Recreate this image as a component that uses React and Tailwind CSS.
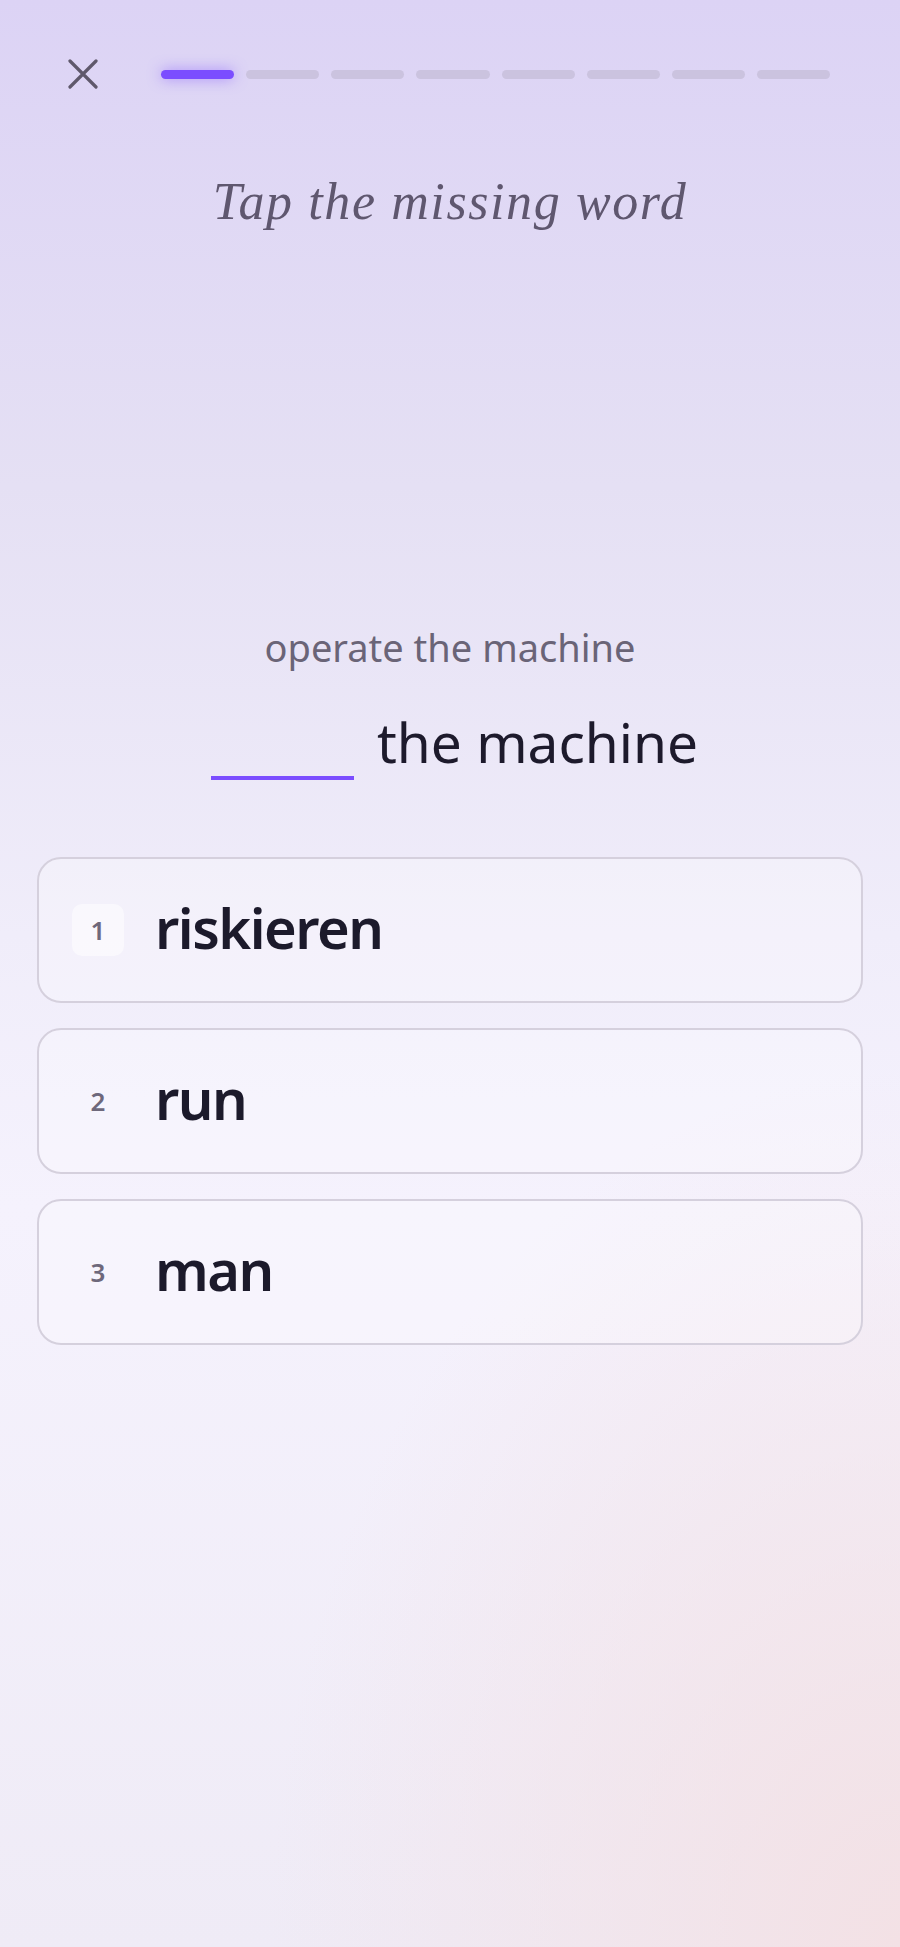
import React from 'react';

const options = [
    { n: 1, word: 'riskieren', active: true },
    { n: 2, word: 'run' },
    { n: 3, word: 'man' },
];

export default function App() {
    return (
        <div className="relative min-h-[1947px] w-full overflow-hidden bg-[radial-gradient(ellipse_70%_45%_at_100%_100%,#f3e1e5_0%,rgba(243,225,229,0)_100%),linear-gradient(180deg,#dcd3f5_0%,#e5e0f4_25%,#f0edfa_48%,#f5f2fd_62%,#efebf6_100%)] font-['Noto_Sans',sans-serif]">
            {/* Header */}
            <div className="flex items-center h-[30px] mt-[59px] pl-[68px] pr-[70px] gap-[63px]">
                <svg width="30" height="30" viewBox="0 0 30 30" className="shrink-0">
                    <path d="M2 2 L28 28 M28 2 L2 28" stroke="#5f586b" strokeWidth="3.2" strokeLinecap="round" />
                </svg>
                <div className="flex flex-1 gap-[12px]">
                    {Array.from({ length: 8 }).map((_, i) => (
                        <div
                            key={i}
                            className={i === 0
                                ? 'h-[9px] flex-1 rounded-full bg-[#7b4dff] shadow-[0_0_14px_rgba(123,77,255,0.55)]'
                                : 'h-[9px] flex-1 rounded-full bg-[#cbc3df]'}
                        />
                    ))}
                </div>
            </div>

            {/* Titulo */}
            <h1 className="mt-[85px] text-center text-[52px] leading-[56px] italic text-[#5f576f] font-['Liberation_Serif',serif] tracking-[1.6px]">
                Tap the missing word
            </h1>

            {/* Frase */}
            <p className="mt-[397px] text-center text-[38px] leading-[40px] text-[#6a6477]">
                operate the machine
            </p>
            <div className="mt-[43px] flex justify-center gap-[23px] pl-[9px]">
                <div className="w-[143px] h-[4px] mt-[66px] bg-[#7b4dff]" />
                <span className="text-[55px] leading-[64px] text-[#1d1a2c]">the machine</span>
            </div>

            {/* Opciones */}
            <div className="mt-[77px] mx-[37px] flex flex-col gap-[25px]">
                {options.map((o) => (
                    <div
                        key={o.n}
                        className="h-[146px] rounded-[24px] border-2 border-[#d5d0dd] bg-white/25 flex items-center pl-[33px] gap-[31px]"
                    >
                        <div className={`w-[52px] h-[52px] rounded-[10px] flex items-center justify-center text-[26px] font-semibold text-[#6e687b] ${o.active ? 'bg-white/50' : ''}`}>
                            {o.n}
                        </div>
                        <span className="text-[56px] font-semibold tracking-[-1.5px] text-[#1c1a2b] leading-none pb-[6px]">{o.word}</span>
                    </div>
                ))}
            </div>
        </div>
    );
}
